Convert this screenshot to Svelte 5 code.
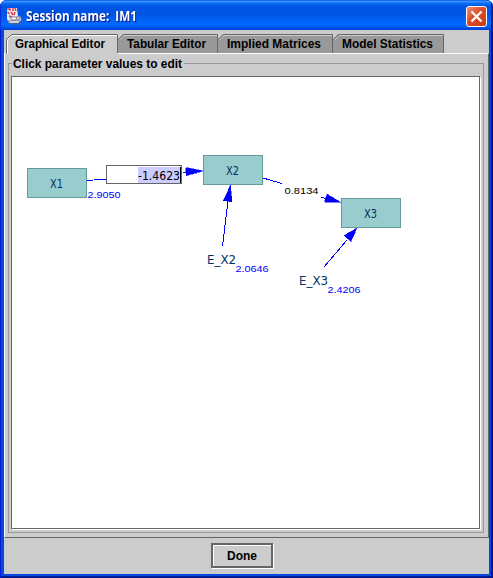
<script>
  const tabs = [
    { label: 'Graphical Editor', width: 112, text: 90 },
    { label: 'Tabular Editor', width: 100, text: 79 },
    { label: 'Implied Matrices', width: 115, text: 94 },
    { label: 'Model Statistics', width: 111, text: 91 }
  ];
  let active = $state(0);

  const boxes = [
    { label: 'X1', x: 27, y: 168 },
    { label: 'X2', x: 203, y: 155 },
    { label: 'X3', x: 341, y: 198 }
  ];
  const edges = [
    { line: [87, 180.5, 107, 179], head: '203,171 185.5,167.5 186.5,175.5', tail: [183, 173, 187, 172] },
    { line: [263, 178, 282, 183.5], head: '341,202.500 327,194 324.500,202', tail: [321, 197, 327, 199] },
    { line: [222.5, 246, 228, 201], head: '230.500,185 223.500,200.500 232,202' },
    { line: [324, 267, 347, 240], head: '357,228 344,235.500 351,241.500' }
  ];
</script>

{#snippet label(text, width, size = 12.6, color = '#000')}
  <svg class="label" {width} height="16" role="img" aria-label={text}>
    <text x="0" y="12" font-size={size} fill={color} textLength={width} lengthAdjust="spacingAndGlyphs">{text}</text>
  </svg>
{/snippet}

<main class="window">
  <header>
    <svg class="java" width="17" height="18" viewBox="0 0 17 18" aria-hidden="true">
      <path d="M1 1h10l1 8 3 1v3l-3 3H3L1 12Z" fill="#ebe9f2" />
      <path d="M1 2h3v2M7 1v3M9 1l1 3M1.500 5l2 2M5 5l2 3M9 5l-1 3M3 9l3 1" stroke="#e23b47" stroke-width="1.500" fill="none" />
      <path d="M4 10h7l-1 3H6Z" fill="#fff" stroke="#76738d" />
      <path d="M11 10h3v2l-3 1" fill="none" stroke="#76738d" />
      <path d="M1 14h12l2 1-3 1H3M5 17h8" stroke="#625e80" fill="none" />
      <path d="M4 15h9" stroke="#fff" />
    </svg>
    <span class="title">{@render label('Session name:  IM1', 111, 14, '#fff')}</span>
    <button class="close" aria-label="Close">
      <svg width="19" height="19" viewBox="0 0 19 19"><path d="M4.500 4.500l10 10M14.500 4.500l-10 10" stroke="#fff" stroke-width="2.3" /></svg>
    </button>
  </header>

  <section class="body">
    <nav>
      {#each tabs as tab, i}
        <button class="tab" class:active={active === i} style:width="{tab.width}px" onclick={() => (active = i)}>
          <svg class="shape" width={tab.width} height="20" viewBox="0 0 {tab.width} 20" aria-hidden="true">
            <path d="M0 {active === i ? 20 : 19}V5L5 0H{tab.width}V{active === i ? 20 : 19}Z" fill={active === i ? '#ccc' : '#999'} />
            <path d="M.5 {active === i ? 20 : 6}V5.500L5.500.5H{tab.width - .5}V19" fill="none" stroke="#666" />
            <path d="M1.500 {active === i ? 20 : 6}V6L6 1.500H{tab.width - 1}" fill="none" stroke={active === i ? '#fff' : '#ccc'} />
          </svg>
          <span>{@render label(tab.label, tab.text)}</span>
        </button>
      {/each}
    </nav>
    <div class="panel">
      <div class="group">
        <div class="legend">{@render label('Click parameter values to edit', 169)}</div>
        <div class="canvas">
          <svg width="467" height="451" viewBox="12 77 467 451">
            <g stroke="#00f" fill="#00f" shape-rendering="crispEdges">
              {#each edges as e}
                <line x1={e.line[0]} y1={e.line[1]} x2={e.line[2]} y2={e.line[3]} />
                {#if e.tail}<line x1={e.tail[0]} y1={e.tail[1]} x2={e.tail[2]} y2={e.tail[3]} />{/if}
                <polygon points={e.head} stroke-width=".5" />
              {/each}
            </g>
            {#each boxes as b}
              <rect x={b.x + .5} y={b.y + .5} width="59" height="29" fill="#9cc" stroke="#699" />
              <text x={b.x + 23} y={b.y + 20} class="node" textLength="13" lengthAdjust="spacingAndGlyphs">{b.label}</text>
            {/each}
            <text x="207" y="264" class="node" textLength="29" lengthAdjust="spacingAndGlyphs">E_X2</text>
            <text x="299" y="285" class="node" textLength="29" lengthAdjust="spacingAndGlyphs">E_X3</text>
            <g class="value">
              <text x="87.500" y="198" textLength="33" lengthAdjust="spacingAndGlyphs">2.9050</text>
              <text x="235.500" y="272" textLength="33" lengthAdjust="spacingAndGlyphs">2.0646</text>
              <text x="327.500" y="293" textLength="33" lengthAdjust="spacingAndGlyphs">2.4206</text>
              <text x="284.500" y="194" textLength="34" lengthAdjust="spacingAndGlyphs" class="black">0.8134</text>
            </g>
            <g shape-rendering="crispEdges">
              <rect x="106" y="165" width="77" height="20" fill="#fff" />
              <rect x="106.500" y="165.500" width="75" height="18" fill="#fff" stroke="#666" />
              <rect x="138" y="167" width="43" height="16" fill="#ccf" />
              <path d="M180.500 167v16" stroke="#000" />
            </g>
            <text x="138" y="180" class="node black" textLength="42" lengthAdjust="spacingAndGlyphs">-1.4623</text>
          </svg>
        </div>
      </div>
    </div>
    <footer><button class="done">{@render label('Done', 30)}</button></footer>
  </section>
</main>

<style>
  :global(body) { margin: 0; background: #fff; }
  * { box-sizing: border-box; }
  button { padding: 0; border: 0; }
  .window {
    width: 493px; height: 578px; padding: 0 4px 4px;
    border-radius: 7px 7px 0 0; overflow: hidden;
    background: #0649e2;
    box-shadow: inset 1px 0 #0019cf, inset -1px 0 #00138c, inset -2px 0 #001ea0, inset 0 -1px #00138c, inset 0 -2px #001ea0;
    font-family: "Liberation Sans", Arial, sans-serif;
  }
  header {
    display: flex; align-items: center; height: 30px; margin: 0 -4px; padding: 3px 6px 0 5px;
    background: linear-gradient(#0058e6 0, #3a93ff 1.500px, #0873f4 3px, #0054e3 6px, #0054e3 14px, #0066fc 22px, #0066fc 25px, #005bf0 27px, #003dd7 30px);
    box-shadow: inset 1px 0 #0831d9, inset -2px 0 #001ea0;
  }
  .java { margin: -2px 3px 0 1px; }
  .title { display: flex; font-family: "Open Sans", "Noto Sans", sans-serif; filter: drop-shadow(1px 1px 0 #0a1883); }
  .close {
    display: grid; place-items: center; width: 21px; height: 21px; margin-left: auto;
    border: 1px solid #fff; border-radius: 3px;
    background: linear-gradient(135deg, #f09078, #dd4a25 45%, #c63b16);
  }
  .label { display: block; overflow: visible; }
  .label text { font-weight: bold; white-space: pre; }
  .body { height: 544px; background: #ccc; display: flex; flex-direction: column; }
  nav { display: flex; height: 23px; padding: 4px 0 0 2px; }
  .tab { position: relative; height: 19px; background: none; }
  .tab span { display: block; padding: 1px 0 0 9px; position: relative; }
  .shape { position: absolute; left: 0; top: 0; }
  .panel {
    height: 485px; padding: 9px 4px 5px 3px;
    border: 1px solid; border-color: #fff #666 #666 #fff;
  }
  .group { height: 470px; border: 1px solid #999; padding: 12px 2px 2px; position: relative; }
  .legend { position: absolute; left: 3px; top: -8px; width: 172px; padding-left: 1px; background: #ccc; }
  .canvas { width: 469px; height: 453px; border: 1px solid #666; background: #fff; box-shadow: 1px 1px #fff; }
  .canvas svg { display: block; }
  .node { font: 12px "DejaVu Sans", sans-serif; fill: #036; }
  .value { font-size: 9.500px; fill: #00f; }
  .node.black, .value .black { fill: #000; }
  footer { flex: 1; display: flex; justify-content: center; align-items: flex-start; padding-top: 5px; }
  .done {
    display: grid; place-items: center; width: 62px; height: 25px; margin-right: 9px;
    background: #ccc; border: 2px solid #666; box-shadow: 1px 1px #fff, inset 1px 1px #fff;
  }
</style>
